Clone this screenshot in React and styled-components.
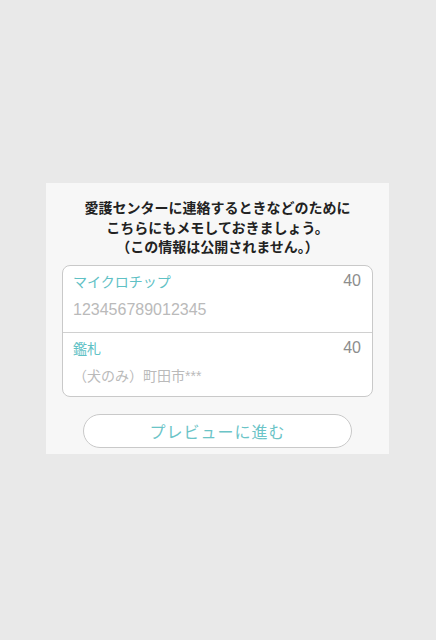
import styled, { createGlobalStyle } from 'styled-components';

const GlobalStyle = createGlobalStyle`
  html, body {
    margin: 0;
    padding: 0;
    background: #e9e9e9;
    font-family: "Noto Sans CJK JP", "Noto Sans", sans-serif;
  }
`;

const Page = styled.div`
  width: 436px;
  height: 640px;
  padding-top: 183px;
  padding-left: 46px;
  box-sizing: border-box;
`;

const Panel = styled.div`
  width: 343px;
  height: 271px;
  background: #f7f7f7;
  box-sizing: border-box;
  padding: 15px 16px 0;
  display: flex;
  flex-direction: column;
`;

const Notice = styled.p`
  margin: 0;
  text-align: center;
  font-size: 14px;
  font-weight: 700;
  line-height: 19.5px;
  color: #222;
`;

const Card = styled.div`
  margin-top: 8px;
  background: #fff;
  border: 1px solid #c9c9c9;
  border-radius: 8px;
  overflow: hidden;
`;

const Row = styled.div`
  height: ${({ h }) => h}px;
  box-sizing: border-box;
  padding: 5px 11px 0 10px;
  border-top: ${({ first }) => (first ? 'none' : '1px solid #d0d0d0')};
  display: flex;
  flex-direction: column;
`;

const RowHead = styled.div`
  display: flex;
  justify-content: space-between;
  align-items: center;
  height: 20px;
`;

const Label = styled.span`
  font-size: 14px;
  color: #5fc1c5;
`;

const Count = styled.span`
  font-size: 16px;
  color: #8d8d8d;
  font-family: "Liberation Sans", "Noto Sans", sans-serif;
`;

const Value = styled.div`
  margin-top: ${({ mt }) => mt}px;
  font-family: "Liberation Sans", "Noto Sans CJK JP", sans-serif;
  font-size: ${({ size }) => size}px;
  color: #bababa;
  line-height: 20px;
`;

const Button = styled.button`
  margin: 17px auto 0;
  width: 269px;
  height: 34px;
  border-radius: 17px;
  border: 1px solid #c9c9c9;
  background: #fff;
  color: #6bc4c7;
  font-family: "Noto Sans CJK JP", "Noto Sans", sans-serif;
  font-size: 16px;
  letter-spacing: 1px;
  padding: 0;
`;

export default function App() {
  return (
    <>
      <GlobalStyle />
      <Page>
        <Panel>
          <Notice>
            愛護センターに連絡するときなどのために
            <br />
            こちらにもメモしておきましょう。
            <br />
            （この情報は公開されません。）
          </Notice>
          <Card>
            <Row first h={66}>
              <RowHead>
                <Label>マイクロチップ</Label>
                <Count>40</Count>
              </RowHead>
              <Value mt={9} size={16}>123456789012345</Value>
            </Row>
            <Row h={64}>
              <RowHead>
                <Label>鑑札</Label>
                <Count>40</Count>
              </RowHead>
              <Value mt={8} size={14}>（犬のみ）町田市***</Value>
            </Row>
          </Card>
          <Button>プレビューに進む</Button>
        </Panel>
      </Page>
    </>
  );
}
